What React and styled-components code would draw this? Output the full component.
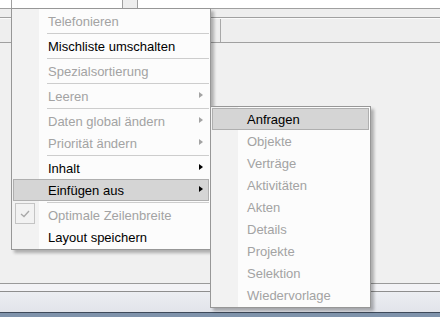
import React from "react";
import styled, { createGlobalStyle } from "styled-components";

const GlobalStyle = createGlobalStyle`
  html, body {
    margin: 0;
    padding: 0;
    background: #f0f0f0;
  }
  body {
    font-family: "Liberation Sans", Arial, sans-serif;
  }
`;

const Screen = styled.div`
  position: relative;
  width: 440px;
  height: 317px;
  overflow: hidden;
  display: flex;
  flex-direction: column;
  background: #f0f0f0;
`;

const TopStrip = styled.div`
  height: 8px;
  display: flex;
  background: #ffffff;
  border-bottom: 1px solid #a0a0a0;
`;

const StripCell = styled.div`
  width: 11px;
  border-right: 1px solid #a0a0a0;
`;

const TabStub = styled.div`
  margin-left: 110px;
  width: 14px;
  background: #eeeeee;
  border-left: 1px solid #a0a0a0;
  border-right: 1px solid #a0a0a0;
`;

const HeaderBand = styled.div`
  height: 8px;
  background: #eeeeee;
  border-bottom: 1px solid #a0a0a0;
`;

const ColumnRow = styled.div`
  height: 23px;
  display: flex;
  background: #eeeeee;
  border-top: 1px solid #fafafa;
  border-bottom: 1px solid #a0a0a0;
`;

const ColumnCell = styled.div`
  width: ${(p) => p.$w}px;
  flex: ${(p) => (p.$w ? "none" : "1")};
  border-right: ${(p) => (p.$w ? "1px solid #a8a8a8" : "none")};
`;

const Content = styled.div`
  flex: 1;
  background: #f0f0f0;
  border-bottom: 1px solid #9a9a9a;
`;

const StatusBand = styled.div`
  height: 7px;
  background: #f3f3f6;
  border-bottom: 1px solid #8e8e8e;
`;

const TaskBar = styled.div`
  height: 20px;
  background: linear-gradient(#eceef2, #e2e4ea);
  border-bottom: 1px solid #3e4a5a;
`;

const BlueEdge = styled.div`
  height: 4px;
  background: #7f93ab;
`;

const Menu = styled.div`
  position: absolute;
  left: ${(p) => p.$x}px;
  top: ${(p) => p.$y}px;
  width: ${(p) => p.$w}px;
  box-sizing: border-box;
  padding: 1px 0;
  border: 1px solid #979797;
  background: linear-gradient(to right, #f2f2f2 0 27px, #fcfcfc 27px);
  box-shadow: 3px 3px 3px rgba(0, 0, 0, 0.28);
  font-size: 13px;
`;

const Item = styled.div`
  position: relative;
  height: 22px;
  margin: 0 1px;
  box-sizing: border-box;
  padding-left: 34px;
  line-height: 21px;
  white-space: nowrap;
  color: ${(p) => (p.$disabled ? "#a3a3a3" : "#000000")};
  background: ${(p) => (p.$active ? "#d5d5d5" : "transparent")};
  border: 1px solid ${(p) => (p.$active ? "#afafaf" : "transparent")};
`;

const Arrow = styled.span`
  position: absolute;
  right: 5px;
  top: 6px;
  width: 0;
  height: 0;
  border-top: 3.5px solid transparent;
  border-bottom: 3.5px solid transparent;
  border-left: 4px solid ${(p) => (p.$disabled ? "#a3a3a3" : "#000000")};
`;

const CheckBox = styled.span`
  position: absolute;
  left: 1px;
  top: -2px;
  width: 20px;
  height: 21px;
  box-sizing: border-box;
  border: 1px solid #c4c4c4;
  display: flex;
  align-items: center;
  justify-content: center;
`;

const Separator = styled.div`
  height: 3px;
  margin-left: 35px;
  margin-right: 1px;
  display: flex;
  align-items: center;

  &::before {
    content: "";
    flex: 1;
    height: 1px;
    background: #cdcdcd;
  }
`;

const mainItems = [
  { label: "Telefonieren", disabled: true, sep: true },
  { label: "Mischliste umschalten", sep: true },
  { label: "Spezialsortierung", disabled: true, sep: true },
  { label: "Leeren", disabled: true, sub: true, sep: true },
  { label: "Daten global ändern", disabled: true, sub: true },
  { label: "Priorität ändern", disabled: true, sub: true, sep: true },
  { label: "Inhalt", sub: true },
  { label: "Einfügen aus", sub: true, active: true, sep: true },
  { label: "Optimale Zeilenbreite", disabled: true, checked: true },
  { label: "Layout speichern" },
];

const subItems = [
  { label: "Anfragen", active: true },
  { label: "Objekte", disabled: true },
  { label: "Verträge", disabled: true },
  { label: "Aktivitäten", disabled: true },
  { label: "Akten", disabled: true },
  { label: "Details", disabled: true },
  { label: "Projekte", disabled: true },
  { label: "Selektion", disabled: true },
  { label: "Wiedervorlage", disabled: true },
];

const Check = () => (
  <svg width="10" height="8" viewBox="0 0 10 8">
    <path d="M1 4 L4 6.5 L9 1" fill="none" stroke="#a8a8a8" strokeWidth="1.3" />
  </svg>
);

const MenuList = ({ items }) =>
  items.map((item) => (
    <React.Fragment key={item.label}>
      <Item $disabled={item.disabled} $active={item.active}>
        {item.checked && (
          <CheckBox>
            <Check />
          </CheckBox>
        )}
        {item.label}
        {item.sub && <Arrow $disabled={item.disabled} />}
      </Item>
      {item.sep && <Separator />}
    </React.Fragment>
  ));

const App = () => {
  return (
    <>
      <GlobalStyle />
      <Screen>
        <TopStrip>
          <StripCell />
          <TabStub />
        </TopStrip>
        <HeaderBand />
        <ColumnRow>
          <ColumnCell $w={220} />
          <ColumnCell />
        </ColumnRow>
        <Content />
        <StatusBand />
        <TaskBar />
        <BlueEdge />

        <Menu $x={11} $y={8} $w={200}>
          <MenuList items={mainItems} />
        </Menu>
        <Menu $x={210} $y={106} $w={161}>
          <MenuList items={subItems} />
        </Menu>
      </Screen>
    </>
  );
};

export default App;
